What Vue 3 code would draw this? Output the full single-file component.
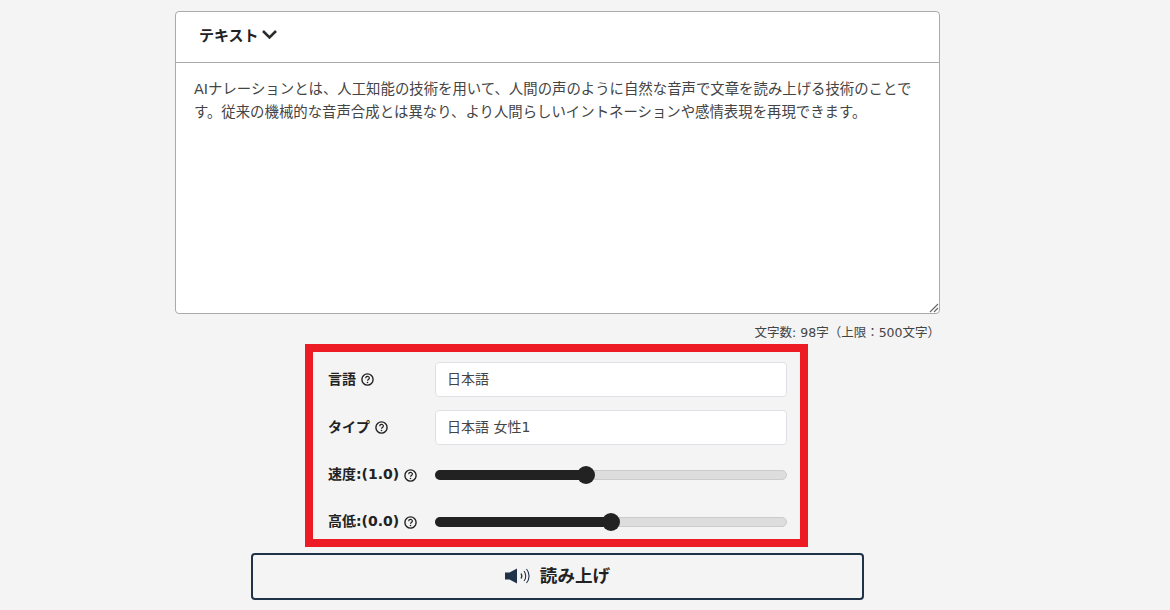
<script setup>
const sliders = [
  { label: '速度:(1.0)', pct: 42.8 },
  { label: '高低:(0.0)', pct: 50 }
]
const selects = [
  { label: '言語', value: '日本語' },
  { label: 'タイプ', value: '日本語 女性1' }
]
</script>

<template>
  <main class="page">
    <section class="card">
      <header class="card-head">
        <span class="head-text">テキスト</span>
        <svg class="chev" width="17" height="11" viewBox="0 0 17 11"><path d="M2 2l6.500 6.500L15 2" fill="none" stroke="#2b2b2b" stroke-width="2.6"/></svg>
      </header>
      <div class="card-body">
        <p>AIナレーションとは、人工知能の技術を用いて、人間の声のように自然な音声で文章を読み上げる技術のことです。従来の機械的な音声合成とは異なり、より人間らしいイントネーションや感情表現を再現できます。</p>
        <svg class="grip" width="10" height="10" viewBox="0 0 10 10"><path d="M1 9l8-8M5 9l4-4" stroke="#666" stroke-width="1.1" fill="none"/></svg>
      </div>
    </section>
    <div class="count">文字数: 98字（上限：500文字）</div>

    <section class="settings">
      <div class="selects">
        <div v-for="s in selects" :key="s.label" class="row">
          <div class="label">
            <b>{{ s.label }}</b>
            <svg class="help" width="13" height="13" viewBox="0 0 13 13"><circle cx="6.500" cy="6.500" r="5.600" fill="none" stroke="#222" stroke-width="1.400"/><path d="M4.700 5.200c0-2.300 3.700-2.300 3.700-.1 0 1.300-1.900 1.300-1.900 2.600" fill="none" stroke="#222" stroke-width="1.200"/><circle cx="6.500" cy="9.500" r=".8" fill="#222"/></svg>
          </div>
          <div class="select">{{ s.value }}</div>
        </div>
      </div>
      <div class="sliders">
        <div v-for="s in sliders" :key="s.label" class="row slider-row">
          <div class="label">
            <b>{{ s.label }}</b>
            <svg class="help" width="13" height="13" viewBox="0 0 13 13"><circle cx="6.500" cy="6.500" r="5.600" fill="none" stroke="#222" stroke-width="1.400"/><path d="M4.700 5.200c0-2.300 3.700-2.300 3.700-.1 0 1.300-1.900 1.300-1.900 2.600" fill="none" stroke="#222" stroke-width="1.200"/><circle cx="6.500" cy="9.500" r=".8" fill="#222"/></svg>
          </div>
          <div class="track">
            <div class="fill" :style="{ width: s.pct + '%' }"></div>
            <div class="thumb" :style="{ left: s.pct + '%' }"></div>
          </div>
        </div>
      </div>
    </section>

    <button class="read" type="button">
      <svg width="25" height="16" viewBox="0 0 25 16"><path d="M0 4.500h4.500L12 .5v15l-7.500-4H0z" fill="#1f3247"/><path d="M16 5.500c1 1.500 1 3.500 0 5" fill="none" stroke="#1f3247" stroke-width="1.300"/><path d="M19 3c2.300 2.800 2.300 7.200 0 10" fill="none" stroke="#1f3247" stroke-width="1.100"/><path d="M21.500 1c3.400 4 3.400 10 0 14" fill="none" stroke="#1f3247" stroke-width="1.100"/></svg>
      <span class="read-text">読み上げ</span>
    </button>
  </main>
</template>

<style scoped>
.page {
  width: 765px;
  margin-left: 175px;
  padding-top: 11px;
  display: flex;
  flex-direction: column;
  align-items: center;
  font-family: "DejaVu Sans", "Noto Sans CJK JP", sans-serif;
  color: #333;
}
.card {
  width: 100%;
  height: 303px;
  box-sizing: border-box;
  background: #fff;
  border: 1px solid #aaa;
  border-radius: 4px;
  display: flex;
  flex-direction: column;
}
.card-head {
  height: 51px;
  flex: none;
  box-sizing: border-box;
  border-bottom: 1px solid #aaa;
  padding: 0 23px 5px;
  display: flex;
  align-items: center;
  gap: 2px;
  font-size: 15px;
  font-weight: 700;
  color: #222;
}
.card-body {
  flex: 1;
  position: relative;
  padding: 15px 18px;
  font-size: 14.400px;
  line-height: 23px;
  color: #444;
}
.card-body p { margin: 0; }
.grip { position: absolute; right: 0; bottom: 0; }
.count {
  align-self: flex-end;
  height: 30px;
  padding: 4px 0 0 0;
  box-sizing: border-box;
  display: flex;
  align-items: center;
  font-size: 12.500px;
  color: #444;
}
.settings {
  width: 503px;
  height: 203px;
  box-sizing: border-box;
  margin-left: -2px;
  border: 8px solid #ed1c24;
  padding: 10px 13px 0 15px;
  display: flex;
  flex-direction: column;
}
.selects {
  display: flex;
  flex-direction: column;
  gap: 13px;
}
.sliders {
  margin-top: 12px;
  display: flex;
  flex-direction: column;
  gap: 11px;
}
.row {
  display: grid;
  grid-template-columns: 107px 352px;
  align-items: center;
  height: 35px;
}
.slider-row { height: 36px; }
.label {
  display: flex;
  align-items: center;
  gap: 5px;
  font-size: 14px;
  color: #222;
}
.label b { position: relative; top: -2px; }
.select {
  height: 35px;
  box-sizing: border-box;
  background: #fff;
  border: 1px solid #dde1e6;
  border-radius: 4px;
  padding: 0 0 3px 11px;
  display: flex;
  align-items: center;
  font-size: 14px;
  color: #444;
}
.track {
  position: relative;
  height: 10px;
  background: #ddd;
  border: 1px solid #ccc;
  box-sizing: border-box;
  border-radius: 5px;
}
.fill {
  height: 100%;
  background: #222;
  border-radius: 5px;
  margin: -1px 0 0 -1px;
  padding: 1px;
  box-sizing: content-box;
}
.thumb {
  position: absolute;
  top: 50%;
  width: 18px;
  height: 18px;
  border-radius: 50%;
  background: #222;
  transform: translate(-50%, -50%);
}
.read {
  width: 613px;
  height: 47px;
  margin-top: 6px;
  padding: 0 0 5px;
  background: #f4f4f4;
  border: 2px solid #1f3247;
  border-radius: 4px;
  display: flex;
  align-items: center;
  justify-content: center;
  gap: 10px;
  font-family: inherit;
  font-size: 17.600px;
  font-weight: 700;
  color: #222;
}
.read svg { position: relative; top: 2px; }
</style>

<style>
html, body { background: #f4f4f4; overflow: hidden; }
</style>
